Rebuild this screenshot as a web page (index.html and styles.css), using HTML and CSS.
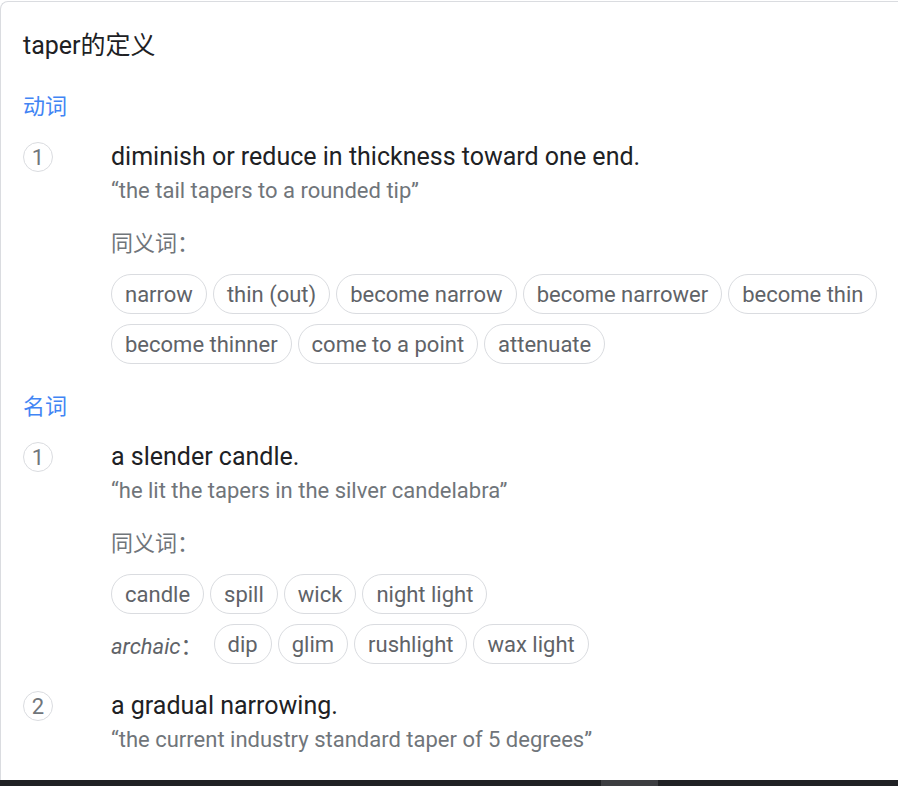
FILE: index.html
```html
<!DOCTYPE html>
<html lang="zh-CN">
<head>
<meta charset="utf-8">
<link rel="stylesheet" href="styles.css">
</head>
<body>
<div class="card">
  <div class="title">taper的定义</div>

  <div class="pos pos-first">动词</div>
  <div class="sense">
    <div class="num">1</div>
    <div class="body">
      <div class="def">diminish or reduce in thickness toward one end.</div>
      <div class="ex">“the tail tapers to a rounded tip”</div>
      <div class="syn-label">同义词：</div>
      <div class="chips">
        <span class="chip">narrow</span>
        <span class="chip">thin (out)</span>
        <span class="chip">become narrow</span>
        <span class="chip">become narrower</span>
        <span class="chip">become thin</span>
        <span class="chip">become thinner</span>
        <span class="chip">come to a point</span>
        <span class="chip">attenuate</span>
      </div>
    </div>
  </div>

  <div class="pos">名词</div>
  <div class="sense">
    <div class="num">1</div>
    <div class="body">
      <div class="def">a slender candle.</div>
      <div class="ex">“he lit the tapers in the silver candelabra”</div>
      <div class="syn-label">同义词：</div>
      <div class="chips">
        <span class="chip">candle</span>
        <span class="chip">spill</span>
        <span class="chip">wick</span>
        <span class="chip">night light</span>
      </div>
      <div class="chips">
        <span class="reg"><i>archaic</i>：</span>
        <span class="chip">dip</span>
        <span class="chip">glim</span>
        <span class="chip">rushlight</span>
        <span class="chip">wax light</span>
      </div>
    </div>
  </div>
  <div class="sense sense-next">
    <div class="num">2</div>
    <div class="body">
      <div class="def">a gradual narrowing.</div>
      <div class="ex">“the current industry standard taper of 5 degrees”</div>
    </div>
  </div>
</div>
<div class="hscroll"><div class="thumb"></div></div>
</body>
</html>
```

FILE: styles.css
```css
html, body {
  margin: 0;
  padding: 0;
  background: #fff;
  overflow: hidden;
}
body {
  font-family: Roboto, "Noto Sans CJK SC", sans-serif;
  color: #202124;
}
.card {
  margin-top: 1px;
  border-top: 1px solid #dadce0;
  border-left: 1px solid #dadce0;
  border-top-left-radius: 8px;
  padding: 30px 0 0 22px;
  height: 900px;
}
.title {
  font-size: 25px;
  line-height: 28px;
  color: #202124;
}
.pos {
  margin-top: 29px;
  font-size: 22px;
  line-height: 28px;
  color: #4285f4;
}
.pos-first {
  margin-top: 33px;
}
.sense {
  display: flex;
  margin-top: 21px;
}
.sense-next {
  margin-top: 27px;
}
.num {
  flex: none;
  width: 28px;
  height: 28px;
  border: 1px solid #dadce0;
  border-radius: 50%;
  display: flex;
  align-items: center;
  justify-content: center;
  font-size: 22px;
  color: #70757a;
  margin-right: 58px;
}
.body {
  flex: 1;
}
.def {
  font-size: 25px;
  line-height: 30px;
  color: #202124;
}
.ex {
  margin-top: 7px;
  font-size: 22px;
  line-height: 24px;
  color: #70757a;
}
.syn-label {
  margin-top: 29px;
  font-size: 22px;
  line-height: 24px;
  color: #70757a;
}
.chips {
  display: flex;
  flex-wrap: wrap;
  align-items: center;
  gap: 10px 6px;
  margin-top: 18px;
}
.chips + .chips {
  margin-top: 10px;
}
.chip {
  height: 38px;
  border: 1px solid #dadce0;
  border-radius: 20px;
  padding: 0 13px;
  display: flex;
  align-items: center;
  font-size: 22px;
  color: #5f6368;
}
.reg {
  font-size: 22px;
  color: #5f6368;
  margin-right: 5px;
}
.hscroll {
  position: fixed;
  left: 0;
  right: 0;
  bottom: 0;
  height: 6px;
  background: #202124;
}
.thumb {
  position: absolute;
  left: 601px;
  width: 57px;
  top: 0;
  bottom: 0;
  background: #3c3d40;
}
```
